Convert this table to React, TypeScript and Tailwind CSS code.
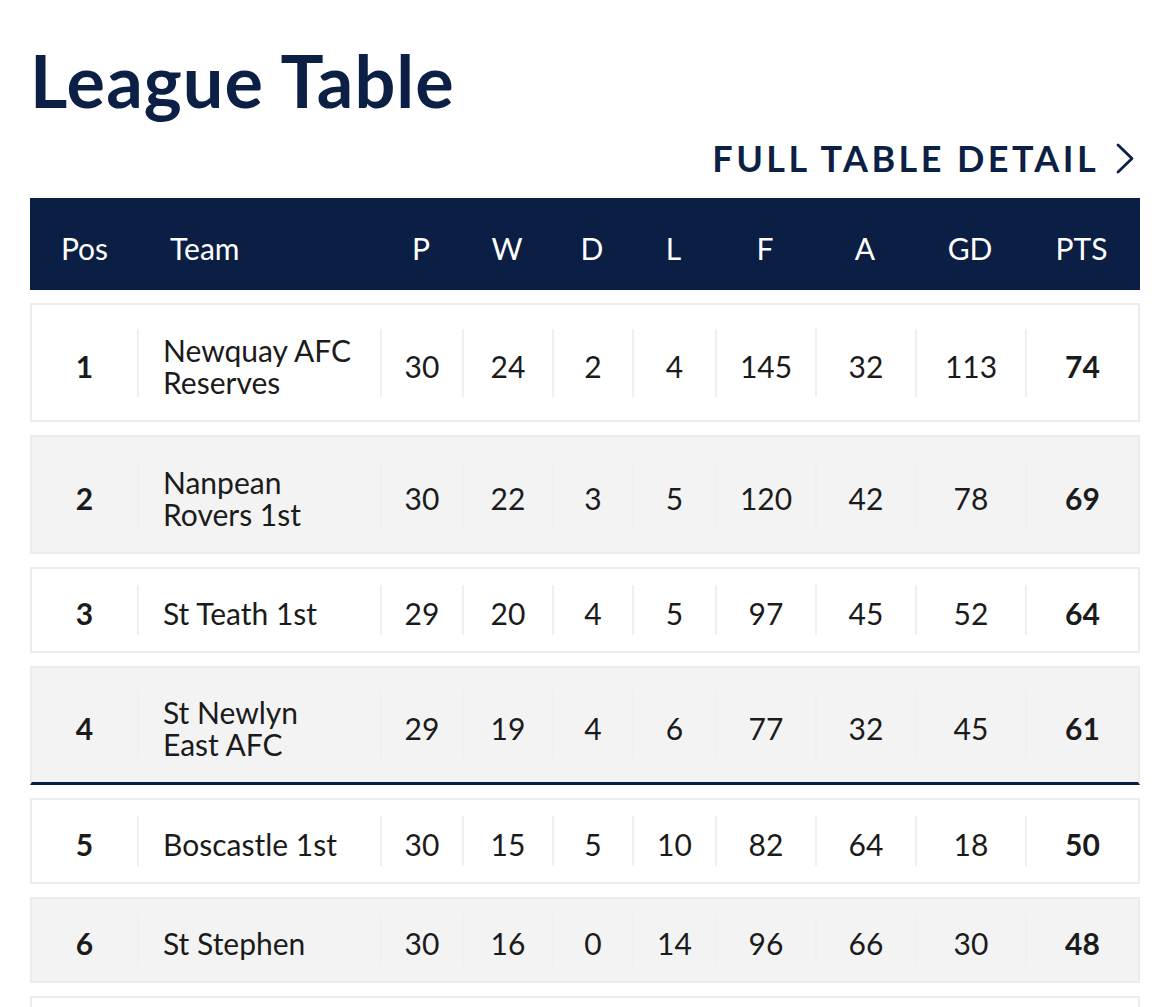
const rows = [
  { pos: 1, team: "Newquay AFC Reserves", p: 30, w: 24, d: 2, l: 4, f: 145, a: 32, gd: 113, pts: 74, twoLine: true },
  { pos: 2, team: "Nanpean Rovers 1st", p: 30, w: 22, d: 3, l: 5, f: 120, a: 42, gd: 78, pts: 69, twoLine: true },
  { pos: 3, team: "St Teath 1st", p: 29, w: 20, d: 4, l: 5, f: 97, a: 45, gd: 52, pts: 64 },
  { pos: 4, team: "St Newlyn East AFC", p: 29, w: 19, d: 4, l: 6, f: 77, a: 32, gd: 45, pts: 61, twoLine: true, cutoff: true },
  { pos: 5, team: "Boscastle 1st", p: 30, w: 15, d: 5, l: 10, f: 82, a: 64, gd: 18, pts: 50 },
  { pos: 6, team: "St Stephen", p: 30, w: 16, d: 0, l: 14, f: 96, a: 66, gd: 30, pts: 48 },
  { pos: 7, team: "Wadebridge Town", p: 30, w: 14, d: 3, l: 13, f: 70, a: 68, gd: 2, pts: 45 },
];

const cols = "grid grid-cols-[105px_243px_82px_90px_80px_83px_100px_100px_110px_1fr]";

function Cell({ children, bold, first }: { children: React.ReactNode; bold?: boolean; first?: boolean }) {
  return (
    <div
      className={`flex items-center justify-center pt-[5px] leading-none ${first ? "" : "border-l-2 border-[#f0f0f0]"} ${bold ? "font-bold" : ""}`}
    >
      {children}
    </div>
  );
}

function rowClass(r: (typeof rows)[number]) {
  if (r.cutoff) return "grid-rows-[68px] pt-[23px] pb-[23px] border-b-[3px] border-b-[#0b1f45]";
  if (r.twoLine) return "grid-rows-[68px] pt-[24px] pb-[23px]";
  return "grid-rows-[50px] py-4";
}

export default function App() {
  return (
    <div className="min-h-screen bg-white px-[30px] pt-[44px] font-['Lato',sans-serif] text-[#1b1b1b]">
      <h1 className="text-[72px] font-bold leading-none tracking-[0.015em] text-[#0c1f44]">League Table</h1>

      <div className="mt-[24px] flex justify-end pr-[5px]">
        <a className="flex items-center gap-[16px] text-[36px] font-bold uppercase leading-none tracking-[0.095em] text-[#0c1f44]">
          Full Table Detail
          <svg width="20" height="31" viewBox="0 0 20 31" fill="none" stroke="currentColor" strokeWidth="2.8" strokeLinecap="round" strokeLinejoin="round">
            <path d="M3 2l14 13.5L3 29" />
          </svg>
        </a>
      </div>

      <div className={`${cols} mt-[22px] h-[92px] items-center bg-[#0b1f45] px-[2px] pt-[8px] text-[30px] text-white`}>
        <div className="text-center">Pos</div>
        <div className="pl-[33px]">Team</div>
        <div className="text-center">P</div>
        <div className="text-center">W</div>
        <div className="text-center">D</div>
        <div className="text-center">L</div>
        <div className="text-center">F</div>
        <div className="text-center">A</div>
        <div className="text-center">GD</div>
        <div className="text-center">PTS</div>
      </div>

      <div className="mt-[13px] flex flex-col gap-[13px]">
        {rows.map((r) => (
          <div
            key={r.pos}
            className={`${cols} border-2 text-[30px] ${r.pos % 2 === 0 ? "border-[#ececec] bg-[#f3f3f4]" : "border-[#ececec] bg-white"} ${rowClass(r)}`}
          >
            <Cell first bold>{r.pos}</Cell>
            <div className="flex items-center border-l-2 border-[#f0f0f0] pl-[24px] pt-[5px]">
              <span className={`${r.twoLine ? "w-[192px] leading-[32px]" : "leading-none"}`}>{r.team}</span>
            </div>
            <Cell>{r.p}</Cell>
            <Cell>{r.w}</Cell>
            <Cell>{r.d}</Cell>
            <Cell>{r.l}</Cell>
            <Cell>{r.f}</Cell>
            <Cell>{r.a}</Cell>
            <Cell>{r.gd}</Cell>
            <Cell bold>{r.pts}</Cell>
          </div>
        ))}
      </div>
    </div>
  );
}
